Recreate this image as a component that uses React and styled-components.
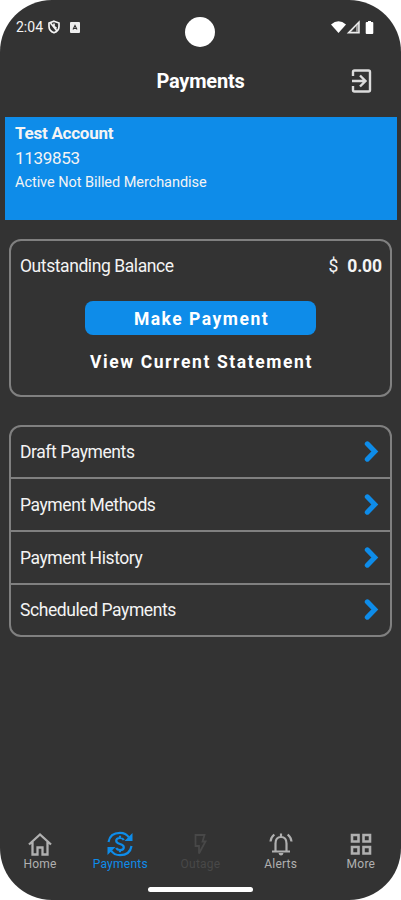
import React from 'react';
import styled, { createGlobalStyle } from 'styled-components';

const BLUE = '#0e8ce9';
const LINE = '#808080';

const GlobalStyle = createGlobalStyle`
  body { margin: 0; background: #fff; }
  *, *::before, *::after { box-sizing: border-box; }
  svg { display: block; flex-shrink: 0; }
`;

const Screen = styled.div`
  width: 401px;
  height: 900px;
  border-radius: 52px;
  background: #333;
  color: #f4f4f4;
  font-family: Roboto, 'Liberation Sans', sans-serif;
  display: flex;
  flex-direction: column;
  overflow: hidden;
`;

const StatusBar = styled.div`
  height: 54px;
  padding: 0 26px 0 16px;
  display: grid;
  grid-template-columns: 1fr 30px 1fr;
  align-items: center;
  flex-shrink: 0;
`;

const StatusGroup = styled.div`
  display: flex;
  align-items: center;
  justify-content: ${(p) => (p.$end ? 'flex-end' : 'flex-start')};
`;

const Clock = styled.span`
  font-size: 14px;
  line-height: 16px;
  width: 32px;
`;

const BadgeSlot = styled.div`
  padding-left: 10px;
`;

const Camera = styled.div`
  width: 30px;
  height: 30px;
  margin-top: 10px;
  margin-left: 4.5px;
  border-radius: 50%;
  background: #fff;
`;

const Header = styled.header`
  height: 63px;
  padding: 0 28px 9px;
  display: grid;
  grid-template-columns: 1fr auto 1fr;
  align-items: center;
  flex-shrink: 0;
`;

const Title = styled.h1`
  grid-column: 2;
  margin: 0;
  font-size: 20px;
  line-height: 24px;
  font-weight: 700;
  letter-spacing: -0.2px;
  color: #fff;
`;

const ExitButton = styled.button`
  justify-self: end;
  padding: 0;
  border: 0;
  background: none;
  color: #dcdcdc;
`;

const AccountCard = styled.section`
  height: 103px;
  margin: 0 4px 0 5px;
  padding: 4px 10px;
  background: ${BLUE};
  display: flex;
  flex-direction: column;
  flex-shrink: 0;
`;

const AccountLine = styled.div`
  font-size: ${(p) => p.$size}px;
  font-weight: ${(p) => p.$weight || 400};
  line-height: ${(p) => p.$line}px;
  letter-spacing: ${(p) => p.$spacing || 0}px;
`;

const BalanceCard = styled.section`
  height: 158px;
  margin: 19px 9px 0;
  padding: 13px 8px 0;
  border: 2px solid ${LINE};
  border-radius: 12px;
  display: flex;
  flex-direction: column;
  align-items: center;
  flex-shrink: 0;
`;

const BalanceRow = styled.div`
  align-self: stretch;
  padding-left: 1px;
  display: flex;
  justify-content: space-between;
  font-size: 17.5px;
  line-height: 24px;
  letter-spacing: -0.42px;
`;

const Amount = styled.span`
  display: flex;
  gap: 9px;
  letter-spacing: -0.1px;
`;

const ActionButton = styled.button`
  width: 231px;
  height: 34px;
  margin-top: 23px;
  padding: 2px 0 0 2px;
  border: 0;
  border-radius: 8px;
  background: ${BLUE};
  color: #fff;
  font: 700 17.5px/20px Roboto, 'Liberation Sans', sans-serif;
  letter-spacing: 1.5px;
  white-space: nowrap;
`;

const StatementButton = styled(ActionButton)`
  height: 32px;
  margin-top: 11px;
  padding-top: 0;
  background: none;
  letter-spacing: 1.6px;
`;

const Menu = styled.nav`
  height: 212px;
  margin: 28px 9px 0;
  border: 2px solid ${LINE};
  border-radius: 12px;
  display: grid;
  grid-template-rows: 50px 53px 53px 52px;
  flex-shrink: 0;
`;

const MenuRow = styled.div`
  padding: 0 10px 0 9px;
  display: flex;
  align-items: center;
  justify-content: space-between;
  font-size: 17.5px;
  letter-spacing: -0.42px;
  & + & { border-top: 2px solid ${LINE}; }
`;

const TabBar = styled.nav`
  margin-top: auto;
  height: 53px;
  display: grid;
  grid-template-columns: repeat(5, 1fr);
  flex-shrink: 0;
`;

const Tab = styled.div`
  display: flex;
  flex-direction: column;
  align-items: center;
  color: ${(p) => p.$color};
`;

const TabLabel = styled.span`
  font-size: 12px;
  line-height: 13px;
  letter-spacing: 0.25px;
`;

const HomeIndicator = styled.div`
  width: 105px;
  height: 5px;
  margin: 3px auto 8px;
  border-radius: 3px;
  background: #fff;
  flex-shrink: 0;
`;

const ShieldIcon = () => (
  <svg width="12" height="14" viewBox="0 0 12 14" fill="none" stroke="currentColor" strokeWidth="1.700">
    <path d="M6 1.200 11 3v3.500c0 3-2 5.200-5 6.300C3 11.700 1 9.500 1 6.500V3z" />
    <path d="m2.500 3 6.500 8M6 3.500v3L8.500 8.500" />
  </svg>
);

const BadgeIcon = () => (
  <svg width="10" height="11" viewBox="0 0 10 11">
    <rect width="10" height="11" rx="1" fill="#eee" />
    <path d="M3 7.500 5 3.500l2 4M3.600 6.500h2.800" fill="none" stroke="#333" strokeWidth="1.100" />
  </svg>
);

const SignalIcons = () => (
  <svg width="44" height="15" viewBox="0 0 44 15">
    <path d="M0 4.500Q7.500-2 15 4.500L7.500 13z" fill="#fff" />
    <path d="M17.500 12.800 28 2v10.800z" fill="#999" stroke="#eee" strokeWidth="1.500" />
    <path d="m20.500 11.500 4.500-5v5z" fill="#333" />
    <path d="M37 1h3v1h1.300q1 0 1 1v10q0 1-1 1h-5.600q-1 0-1-1V3q0-1 1-1H37z" fill="#fff" />
  </svg>
);

const ExitIcon = () => (
  <svg width="24" height="26" viewBox="0 0 24 26" fill="none" stroke="currentColor" strokeWidth="2.400">
    <path d="M4 8V4q0-1.500 1.500-1.500h14Q21 2.500 21 4v18q0 1.500-1.500 1.500h-14Q4 23.500 4 22v-4M3 13h12.500M11 7.500l5.500 5.500-5.500 5.500" />
  </svg>
);

const ChevronIcon = () => (
  <svg width="16" height="24" viewBox="0 0 16 24" fill="none" stroke={BLUE} strokeWidth="5" strokeLinecap="round" strokeLinejoin="miter">
    <path d="m3.300 3.800 7.500 7.700-7.500 7.700" />
  </svg>
);

const HomeIcon = () => (
  <svg width="28" height="27" viewBox="0 0 28 27" fill="none" stroke="currentColor" strokeWidth="2.300">
    <path d="M3 13.500 14 3.500l11 10M6.500 11v12.500h5v-7h5v7h5V11" />
  </svg>
);

const PaymentsIcon = () => (
  <svg width="28" height="27" viewBox="0 0 28 27" fill="none" stroke="currentColor" strokeWidth="2.200">
    <path d="M2.500 11C3.500 5 8 1.800 14 1.800c4 0 7 1.700 9 4.700M25.500 15c-1 6-5.500 9.200-11.500 9.200-4 0-7-1.700-9-4.700" />
    <path d="M26.500 2v8h-8zM1.500 24v-8h8z" fill="currentColor" stroke="none" />
    <path d="M17.800 9q-1-2-3.800-2-3.800 0-3.800 2.800 0 2.200 3.800 3.200t3.800 3.200Q17.800 19 14 19q-2.800 0-3.800-2M14 4.800V7M14 19v2.200" />
  </svg>
);

const OutageIcon = () => (
  <svg width="26" height="27" viewBox="0 0 26 27" fill="none" stroke="currentColor" strokeWidth="1.800">
    <path d="M8.500 4h9l-2 6.500h3l-6.500 12V15H8.500z" />
  </svg>
);

const BellIcon = () => (
  <svg width="26" height="27" viewBox="0 0 26 27" fill="none" stroke="currentColor" strokeWidth="2.200">
    <path d="M4 20.500h18M7.500 20.500v-8c0-4 2-6.500 5.500-6.500s5.500 2.500 5.500 6.500v8M13 2.500V6M2.500 10.500q.3-4 3.800-7M23.500 10.500q-.3-4-3.800-7" />
    <path d="M10.500 22h5q-.5 2.500-2.500 2.500t-2.500-2.500z" fill="currentColor" stroke="none" />
  </svg>
);

const GridIcon = () => (
  <svg width="26" height="27" viewBox="0 0 26 27" fill="none" stroke="currentColor" strokeWidth="2.600">
    <path d="M4 4h6.500v6.500H4zM15.500 4H22v6.500h-6.500zM4 16h6.500v6.500H4zM15.500 16H22v6.500h-6.500z" />
  </svg>
);

const menuItems = ['Draft Payments', 'Payment Methods', 'Payment History', 'Scheduled Payments'];

const tabs = [
  { label: 'Home', Icon: HomeIcon, color: '#b0b0b0' },
  { label: 'Payments', Icon: PaymentsIcon, color: BLUE },
  { label: 'Outage', Icon: OutageIcon, color: '#484848' },
  { label: 'Alerts', Icon: BellIcon, color: '#b0b0b0' },
  { label: 'More', Icon: GridIcon, color: '#b0b0b0' },
];

export default function App() {
  return (
    <>
      <GlobalStyle />
      <Screen>
        <StatusBar>
          <StatusGroup>
            <Clock>2:04</Clock>
            <ShieldIcon />
            <BadgeSlot><BadgeIcon /></BadgeSlot>
          </StatusGroup>
          <Camera />
          <StatusGroup $end><SignalIcons /></StatusGroup>
        </StatusBar>
        <Header>
          <Title>Payments</Title>
          <ExitButton aria-label="Sign out"><ExitIcon /></ExitButton>
        </Header>
        <AccountCard>
          <AccountLine $size={17} $weight={700} $line={24} $spacing={-0.25}>Test Account</AccountLine>
          <AccountLine $size={17} $line={27} $spacing={-0.3}>1139853</AccountLine>
          <AccountLine $size={14.5} $line={22} $spacing={-0.05}>Active Not Billed Merchandise</AccountLine>
        </AccountCard>
        <BalanceCard>
          <BalanceRow>
            <span>Outstanding Balance</span>
            <Amount><span>$</span><strong>0.00</strong></Amount>
          </BalanceRow>
          <ActionButton>Make Payment</ActionButton>
          <StatementButton>View Current Statement</StatementButton>
        </BalanceCard>
        <Menu>
          {menuItems.map((label) => (
            <MenuRow key={label}><span>{label}</span><ChevronIcon /></MenuRow>
          ))}
        </Menu>
        <TabBar>
          {tabs.map(({ label, Icon, color }) => (
            <Tab key={label} $color={color}><Icon /><TabLabel>{label}</TabLabel></Tab>
          ))}
        </TabBar>
        <HomeIndicator />
      </Screen>
    </>
  );
}
